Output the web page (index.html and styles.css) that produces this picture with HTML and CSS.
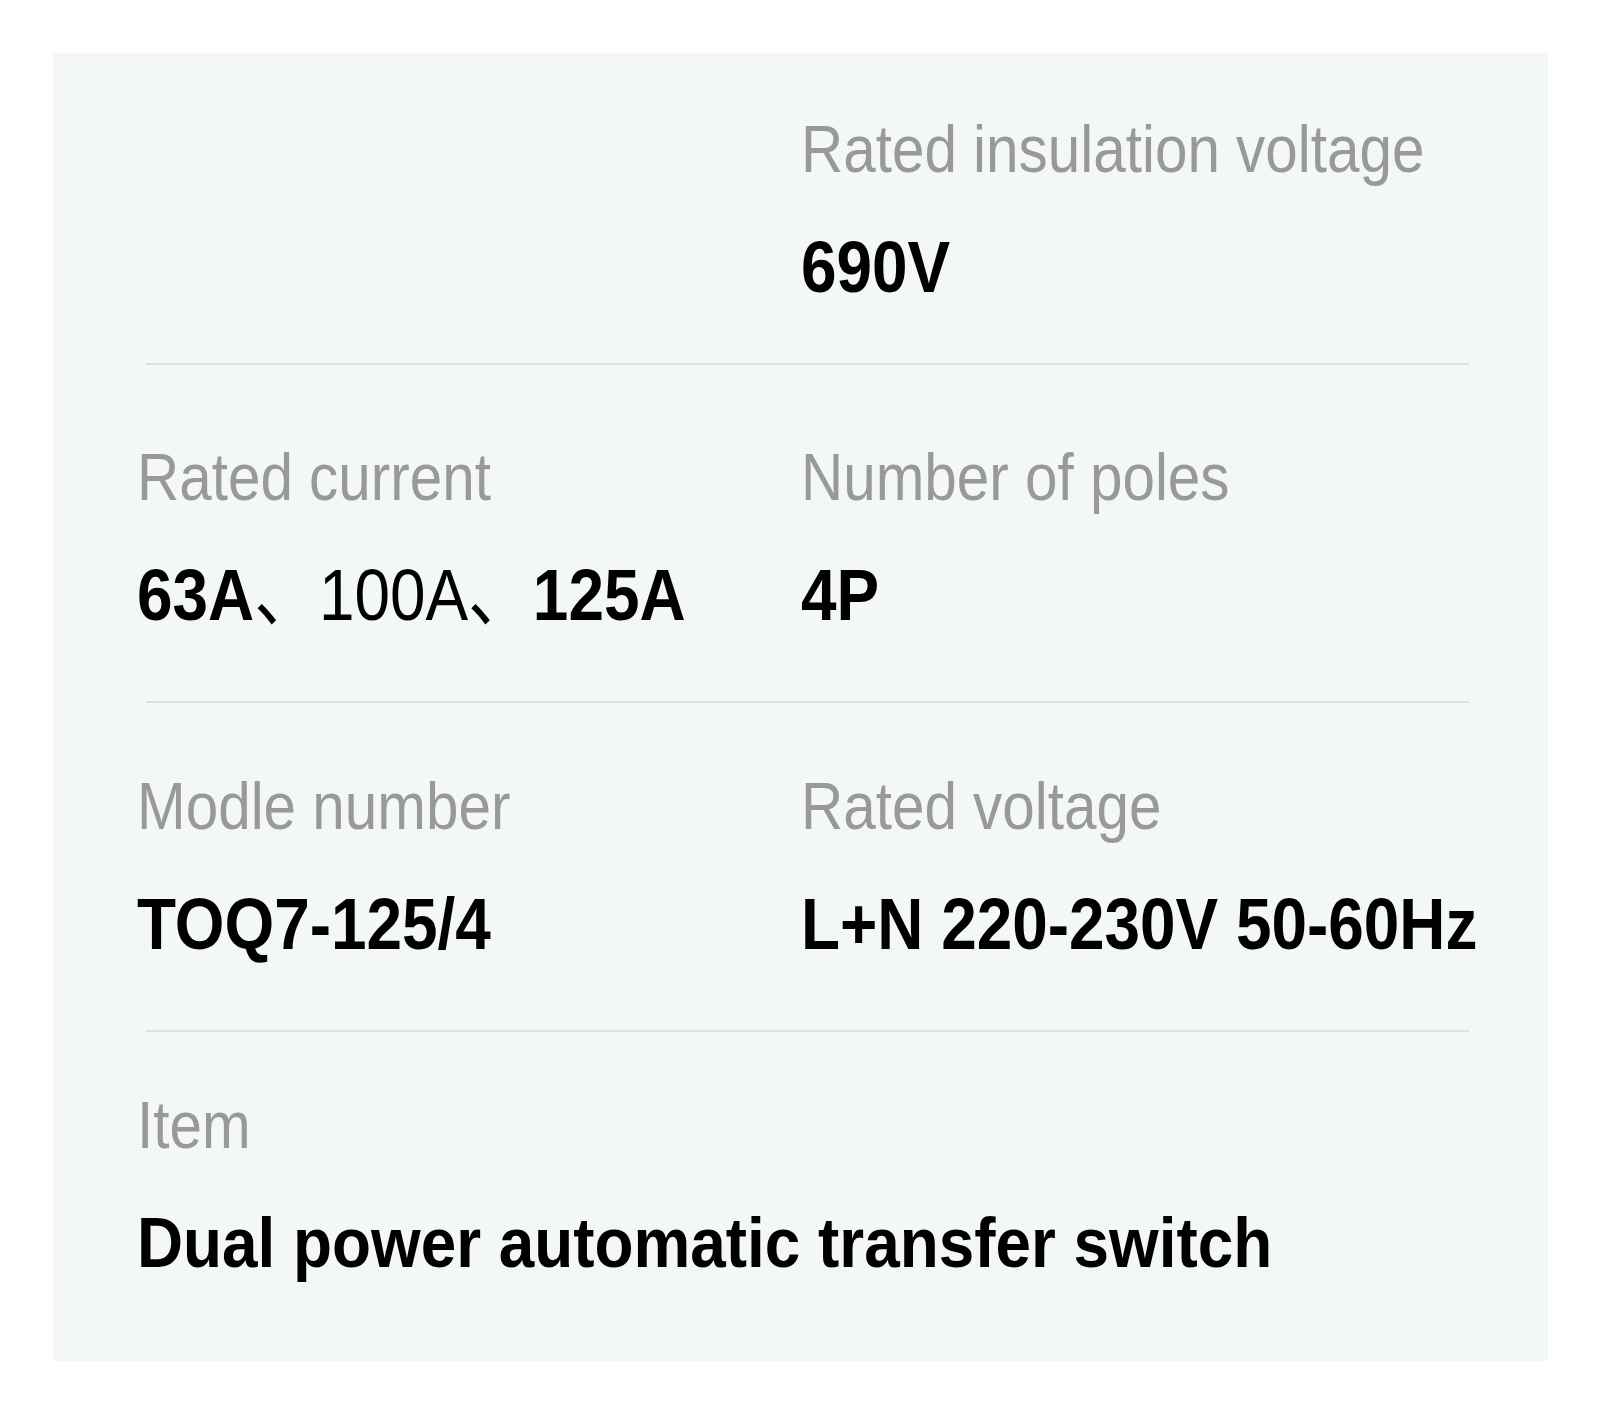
FILE: index.html
```html
<!DOCTYPE html>
<html lang="en">
<head>
  <meta charset="UTF-8">
  <meta name="viewport" content="width=device-width, initial-scale=1.0">
  <title>Product Specifications</title>
  <link rel="stylesheet" href="styles.css">
</head>
<body>
  <div class="specs">
    <!-- Row 1 -->
    <div class="spec-row row-first">
      <div class="spec"></div>
      <div class="spec">
        <div class="label">Rated insulation voltage</div>
        <div class="value">690V</div>
      </div>
    </div>
    <div class="divider"></div>
    <!-- Row 2 -->
    <div class="spec-row row-second">
      <div class="spec">
        <div class="label">Rated current</div>
        <div class="value">63A<span class="sep">、</span><span class="thin">100A</span><span class="sep">、</span>125A</div>
      </div>
      <div class="spec">
        <div class="label">Number of poles</div>
        <div class="value">4P</div>
      </div>
    </div>
    <div class="divider"></div>
    <!-- Row 3 -->
    <div class="spec-row row-third">
      <div class="spec">
        <div class="label">Modle number</div>
        <div class="value">TOQ7-125/4</div>
      </div>
      <div class="spec">
        <div class="label">Rated voltage</div>
        <div class="value">L+N 220-230V 50-60Hz</div>
      </div>
    </div>
    <div class="divider"></div>
    <!-- Row 4 -->
    <div class="spec-row row-last">
      <div class="spec spec-wide">
        <div class="label">Item</div>
        <div class="value value-title">Dual power automatic transfer switch</div>
      </div>
    </div>
  </div>
</body>
</html>
```

FILE: styles.css
```css
/* General Styles */
body {
  margin: 0;
  background: #ffffff;
  font-family: 'Liberation Sans', 'Noto Sans CJK SC', Arial, sans-serif;
}

.specs {
  margin: 53px 0 0 53px;
  width: 1495px;
  box-sizing: border-box;
  padding: 56px 79px 78px 84px;
  background: #f4f7f8;
}

.spec-row {
  display: grid;
  grid-template-columns: 664px 1fr;
}

.row-first {
  padding-bottom: 56px;
}

.row-second {
  padding: 72px 0 66px;
}

.row-third {
  padding: 63px 0 66px;
}

.row-last {
  padding-top: 53px;
}

.spec-wide {
  grid-column: 1 / 3;
}

.label {
  font-size: 66px;
  line-height: 80px;
  color: #999999;
  white-space: nowrap;
  transform: scaleX(0.885);
  transform-origin: 0 50%;
}

.value {
  margin-top: 38px;
  font-size: 73px;
  line-height: 80px;
  font-weight: bold;
  color: #000000;
  white-space: nowrap;
  transform: scaleX(0.875);
  transform-origin: 0 50%;
}

.value .thin {
  font-weight: normal;
}

.value .sep {
  font-weight: normal;
  margin-right: 1px;
}

.value-title {
  font-size: 70px;
  transform: scaleX(0.912);
}

.divider {
  height: 2px;
  margin-left: 9px;
  background: #dde0e3;
}
```
